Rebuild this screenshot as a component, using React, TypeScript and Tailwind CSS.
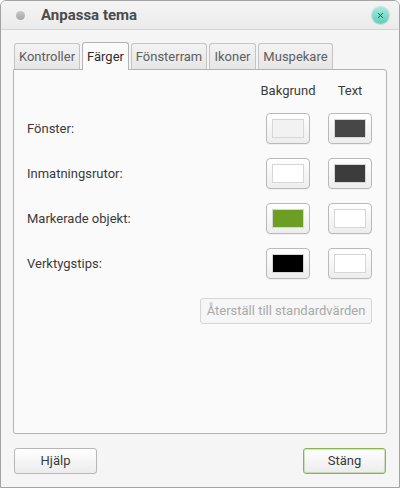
import { X } from 'lucide-react'

const rows = [
  { label: 'Fönster:', bg: 'bg-[#f2f2f2]', fg: 'bg-[#474747]' },
  { label: 'Inmatningsrutor:', bg: 'bg-white', fg: 'bg-[#3c3c3c]' },
  { label: 'Markerade objekt:', bg: 'bg-[#6b9e23]', fg: 'bg-white' },
  { label: 'Verktygstips:', bg: 'bg-black', fg: 'bg-white' },
]

const tabs = [
  { name: 'Kontroller', w: 'w-[66px]' },
  { name: 'Färger', w: 'w-[47px]', active: true },
  { name: 'Fönsterram', w: 'w-[76px]' },
  { name: 'Ikoner', w: 'w-[47px]' },
  { name: 'Muspekare', w: 'w-[75px]' },
]

function Swatch({ color }: { color: string }) {
  return (
    <button className="flex h-[31px] w-[44px] items-center justify-center rounded-[4px] border border-[#b9b9b9] bg-gradient-to-b from-white to-[#ededed] shadow-[0_1px_0_rgba(0,0,0,0.04)]">
      <span className={`h-[19px] w-[32px] border border-[#d6d6d6] ${color}`} />
    </button>
  )
}

export default function App() {
  return (
    <div className="flex h-[488px] w-[400px] flex-col overflow-hidden rounded-t-[6px] border border-[#a3a3a3] bg-[#f5f5f5] font-['Roboto',sans-serif] text-[13px] text-[#3a3a3a]">
      {/* title bar */}
      <div className="flex h-[29px] shrink-0 items-center border-b border-[#d4d4d4] bg-gradient-to-b from-[#f4f4f4] to-[#ebebeb]">
        <span className="ml-[15px] h-[9px] w-[9px] rounded-full bg-gradient-to-b from-[#c9c9c9] to-[#a5a5a5]" />
        <span className="ml-[16px] text-[15px] font-bold text-[#4b4b4b]">Anpassa tema</span>
        <span className="ml-auto mr-[10px] flex h-[17px] w-[17px] items-center justify-center rounded-full bg-gradient-to-b from-[#a3eadc] to-[#5ccdb8] shadow-[0_0_0_1px_rgba(60,160,140,0.25)]">
          <X size={9} strokeWidth={2.5} className="text-[#2f4f48]" />
        </span>
      </div>

      <div className="flex flex-1 flex-col px-[12px] pt-[12px] pb-[13px]">
        {/* tabs */}
        <div className="relative z-10 flex h-[27px] items-end gap-[2px] pl-[1px]">
          {tabs.map((t) =>
            t.active ? (
              <div
                key={t.name}
                className={`-mb-px flex h-[28px] items-center justify-center rounded-t-[3px] border border-b-0 border-[#b3b3b3] bg-[#fafafa] text-[#2e2e2e] ${t.w}`}
              >
                {t.name}
              </div>
            ) : (
              <div
                key={t.name}
                className={`flex h-[26px] items-center justify-center whitespace-nowrap rounded-t-[3px] border border-b-0 border-[#c4c4c4] bg-gradient-to-b from-[#f3f3f3] to-[#e6e6e6] text-[#5e5e5e] ${t.w}`}
              >
                {t.name}
              </div>
            ),
          )}
        </div>

        {/* panel */}
        <div className="flex flex-1 flex-col rounded-b-[3px] rounded-tr-[3px] border border-[#b3b3b3] bg-[#fafafa] pl-[13px] pr-[14px] pt-[12px]">
          <div className="flex h-[18px] items-center justify-end gap-[18px]">
            <div className="flex w-[44px] justify-center whitespace-nowrap">Bakgrund</div>
            <div className="flex w-[44px] justify-center">Text</div>
          </div>
          <div className="mt-[13px] flex flex-col gap-[14px]">
            {rows.map((r) => (
              <div key={r.label} className="flex items-center">
                <span className="flex-1">{r.label}</span>
                <div className="flex gap-[18px]">
                  <Swatch color={r.bg} />
                  <Swatch color={r.fg} />
                </div>
              </div>
            ))}
          </div>
          <div className="mt-[19px] flex justify-end">
            <button className="h-[26px] w-[172px] whitespace-nowrap rounded-[3px] border border-[#d6d6d6] bg-[#f6f6f6] text-[#a9a9a9]">
              Återställ till standardvärden
            </button>
          </div>
        </div>

        {/* bottom buttons */}
        <div className="mt-[14px] flex justify-between px-[1px]">
          <button className="h-[26px] w-[83px] rounded-[3px] border border-[#b7b7b7] bg-gradient-to-b from-white to-[#ececec] text-[#3a3a3a]">
            Hjälp
          </button>
          <button className="h-[26px] w-[83px] rounded-[3px] border border-[#86b552] bg-gradient-to-b from-white to-[#ececec] text-[#3a3a3a] shadow-[inset_0_0_0_1px_rgba(134,181,82,0.35)]">
            Stäng
          </button>
        </div>
      </div>
    </div>
  )
}
